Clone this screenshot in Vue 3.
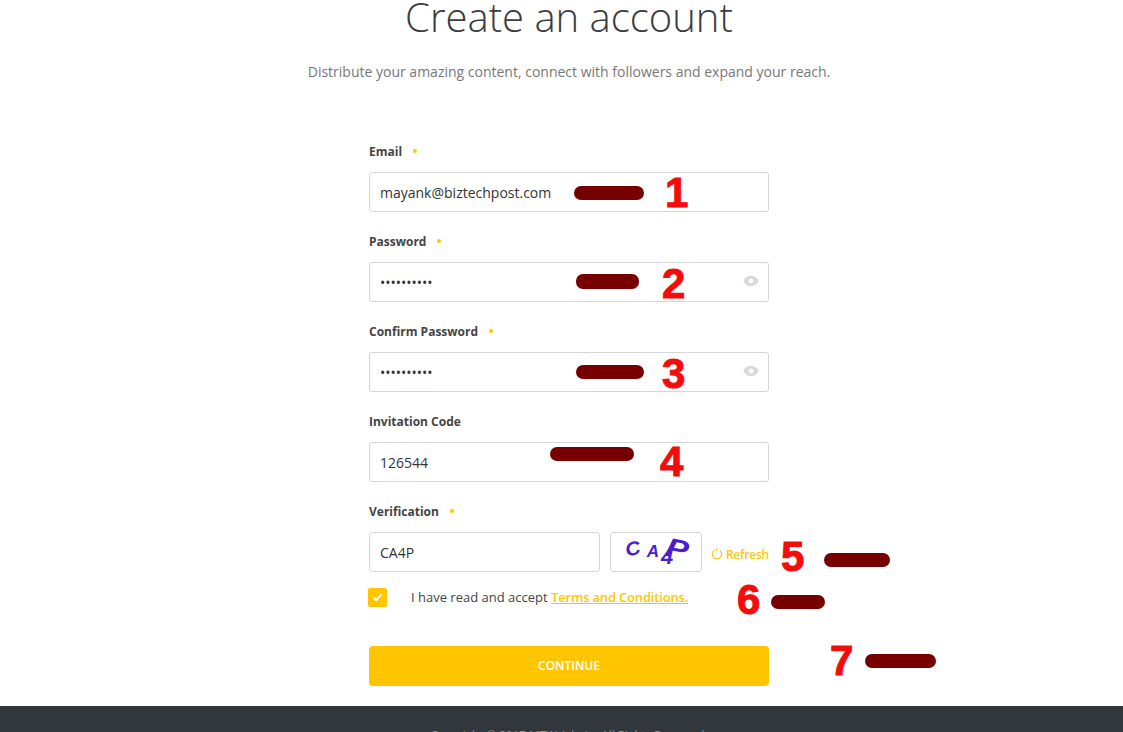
<script setup>
import { ref } from 'vue'

const fields = [
  { id: 'email', label: 'Email', required: true, value: 'mayank@biztechpost.com', type: 'text' },
  { id: 'password', label: 'Password', required: true, value: 'abcdefghij', type: 'password', eye: true },
  { id: 'confirm', label: 'Confirm Password', required: true, value: 'abcdefghij', type: 'password', eye: true },
  { id: 'invite', label: 'Invitation Code', required: false, value: '126544', type: 'text' },
]

// red numbers and dark marks scribbled over the screenshot
const marks = [
  { n: '1', nx: 665, ny: 172, bx: 574, by: 186, bw: 70, bh: 14 },
  { n: '2', nx: 662, ny: 263, bx: 576, by: 274, bw: 63, bh: 15 },
  { n: '3', nx: 662, ny: 353, bx: 576, by: 365, bw: 68, bh: 14 },
  { n: '4', nx: 660, ny: 441, bx: 550, by: 447, bw: 84, bh: 14 },
  { n: '5', nx: 781, ny: 536, bx: 824, by: 553, bw: 66, bh: 14 },
  { n: '6', nx: 737, ny: 579, bx: 771, by: 595, bw: 54, bh: 14 },
  { n: '7', nx: 830, ny: 640, bx: 865, by: 654, bw: 71, bh: 14 },
]

const agreed = ref(true)
const code = ref('CA4P')
</script>

<template>
  <div class="page">
    <header class="head">
      <h1>Create an account</h1>
      <p>Distribute your amazing content, connect with followers and expand your reach.</p>
    </header>

    <form class="form" @submit.prevent>
      <div v-for="f in fields" :key="f.id" class="field">
        <label :for="f.id">{{ f.label }}<i v-if="f.required" class="dot"></i></label>
        <div class="box">
          <input :id="f.id" :type="f.type" :value="f.value" />
          <svg v-if="f.eye" class="eye" viewBox="0 0 16 12" width="16" height="12">
            <path fill-rule="evenodd" fill="#d8d8d8" d="M8 .8C4.600.8 1.800 3 .3 6c1.500 3 4.300 5.200 7.700 5.200S14.200 9 15.700 6C14.200 3 11.400.8 8 .8zM8 3.600a2.400 2.400 0 1 1 0 4.800 2.400 2.400 0 0 1 0-4.800z" />
          </svg>
        </div>
      </div>

      <div class="field">
        <label for="code">Verification<i class="dot"></i></label>
        <div class="verify">
          <input id="code" v-model="code" class="code-input" type="text" />
          <div class="captcha">
            <span class="c1">C</span><span class="c2">A</span><span class="c3">4</span><span class="c4">P</span>
          </div>
          <a class="refresh">
            <svg viewBox="0 0 12 12" width="12" height="12" fill="none" stroke="#ffc600" stroke-width="1.100">
              <path d="M3.300 2.500A4.600 4.600 0 1 0 8.700 2.500" />
              <path d="M4.800 .6 6 1.900 4.500 2.900" />
            </svg>
            Refresh
          </a>
        </div>
      </div>

      <div class="terms">
        <span class="check" @click="agreed = !agreed">
          <svg v-if="agreed" viewBox="0 0 12 10" width="11" height="9" fill="none" stroke="#fff" stroke-width="2">
            <path d="M1.500 5 4.500 8 10.500 1.500" />
          </svg>
        </span>
        <span class="terms-text">I have read and accept <a>Terms and Conditions.</a></span>
      </div>

      <button class="continue" type="submit">CONTINUE</button>
    </form>

    <footer class="foot">Copyright © 2017 MTW Admin. All Rights Reserved.</footer>

    <template v-for="m in marks" :key="m.n">
      <span class="num" :style="{ left: m.nx + 'px', top: m.ny + 'px' }">{{ m.n }}</span>
      <span class="bar" :style="{ left: m.bx + 'px', top: m.by + 'px', width: m.bw + 'px', height: m.bh + 'px' }"></span>
    </template>
  </div>
</template>

<style>
html, body {
  margin: 0;
  height: 732px;
  overflow: hidden;
  background: #fff;
}
</style>

<style scoped>
.page {
  position: relative;
  width: 1123px;
  height: 732px;
  overflow: hidden;
  font-family: "Open Sans", "Liberation Sans", sans-serif;
  color: #333;
}
.head {
  box-sizing: border-box;
  width: 1138px;
  height: 132px;
  text-align: center;
}
.head h1 {
  margin: -13px 0 0;
  font-size: 40px;
  line-height: 60px;
  font-weight: 300;
  color: #3c3c3c;
}
.head p {
  margin: 15px 0 0;
  font-size: 14px;
  line-height: 20px;
  color: #777;
}
.form {
  width: 400px;
  margin-left: 369px;
  padding-top: 9px;
  margin-top: 13px;
}
.field {
  height: 90px;
}
.field label {
  display: flex;
  align-items: center;
  height: 20px;
  margin-bottom: 11px;
  font-size: 12px;
  font-weight: 700;
  color: #444;
}
.dot {
  width: 4px;
  height: 4px;
  margin-left: 11px;
  border-radius: 50%;
  background: #ffc600;
}
.box {
  position: relative;
}
input {
  box-sizing: border-box;
  display: block;
  width: 100%;
  height: 40px;
  padding: 0 10px;
  border: 1px solid #d6d6d6;
  border-radius: 3px;
  outline: none;
  font-family: inherit;
  font-size: 14px;
  color: #333;
  background: #fff;
}
.eye {
  position: absolute;
  right: 10px;
  top: 13px;
}
.verify {
  display: flex;
  align-items: center;
}
.code-input {
  width: 232px;
}
.captcha {
  box-sizing: border-box;
  display: flex;
  justify-content: center;
  align-items: center;
  width: 92px;
  height: 40px;
  margin-left: 10px;
  border: 1px solid #d6d6d6;
  border-radius: 3px;
  font-family: "Liberation Sans", sans-serif;
  font-weight: 700;
  font-style: italic;
  color: #4a1fd0;
  line-height: 1;
}
.captcha span {
  display: inline-block;
}
.c1 {
  font-size: 19px;
  transform: translateY(-4px) rotate(-14deg) scaleX(1.1);
  margin-right: 7px;
}
.c2 {
  font-size: 17px;
  transform: translateY(-1px);
  margin-right: 2px;
}
.c3 {
  font-size: 22px;
  transform: translateY(5px);
  margin-right: -5px;
}
.c4 {
  font-size: 27px;
  transform: translateY(-3px) rotate(12deg) scaleX(1.25);
}
.refresh {
  display: flex;
  align-items: center;
  gap: 3px;
  margin-left: 9px;
  padding-top: 4px;
  font-size: 12px;
  font-weight: 600;
  letter-spacing: -0.2px;
  color: #ffc600;
}
.terms {
  display: flex;
  align-items: center;
  height: 20px;
  margin-top: -4px;
}
.check {
  display: flex;
  justify-content: center;
  align-items: center;
  width: 19px;
  height: 19px;
  margin-left: -1px;
  border-radius: 2px;
  background: #ffc600;
}
.terms-text {
  margin-left: 24px;
  font-size: 13px;
  color: #444;
}
.terms-text a {
  color: #ffc600;
  font-weight: 600;
  letter-spacing: -0.18px;
  text-decoration: underline;
}
.continue {
  display: block;
  width: 400px;
  height: 40px;
  margin-top: 39px;
  padding-bottom: 3px;
  border: 0;
  border-radius: 4px;
  background: #ffc600;
  color: #fff;
  font-family: inherit;
  font-size: 12px;
  font-weight: 600;
}
.foot {
  position: absolute;
  left: 0;
  top: 706px;
  width: 1138px;
  height: 60px;
  padding-top: 21px;
  box-sizing: border-box;
  background: #32373b;
  color: #8b8f92;
  font-size: 11.7px;
  text-align: center;
}
.num {
  position: absolute;
  font-family: "Liberation Sans", sans-serif;
  font-size: 42px;
  font-weight: 700;
  line-height: 42px;
  color: #f40b0b;
  -webkit-text-stroke: 1px #f40b0b;
}
.bar {
  position: absolute;
  border-radius: 7px;
  background: #760000;
}
</style>
